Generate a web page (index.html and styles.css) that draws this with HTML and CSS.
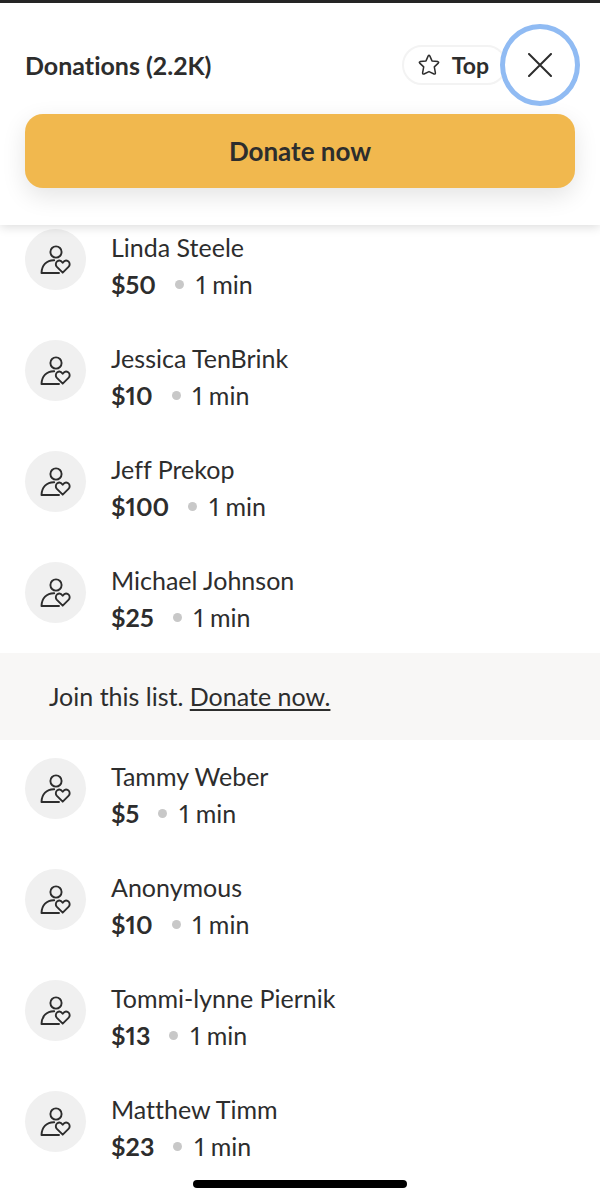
FILE: index.html
```
<!DOCTYPE html>
<html lang="en">
<head>
    <meta charset="UTF-8">
    <meta name="viewport" content="width=device-width, initial-scale=1.0">
    <title>Donations</title>
    <link rel="stylesheet" href="styles.css">
</head>
<body>

<!-- Shared icon -->
<svg class="icon-defs" aria-hidden="true">
    <symbol id="donor-icon" viewBox="0 0 32 30">
        <circle cx="16" cy="7" r="5.6"/>
        <path d="M14.2 15.2C6.500 15 1.700 20.500 1.500 28H19"/>
        <path d="M22.700 27.700L16.900 21.900C15.300 20.200 15.500 17.600 17.300 16.300C19 15.100 21.200 15.600 22.700 17.700C24.200 15.600 26.400 15.100 28.200 16.300C30 17.600 30.200 20.200 28.500 21.900Z"/>
    </symbol>
</svg>

<!-- Header -->
<header class="header">
    <div class="header-row">
        <h1 class="title">Donations (2.2K)</h1>
        <button class="top-button" type="button">
            <svg class="star-icon" viewBox="0 0 22 22" aria-hidden="true">
                <path d="M10.200 1.900Q11 0.700 11.800 1.900L14 6.900L19.900 7.600Q21.200 8 20.300 9.100L16.300 12.900L17.400 18.900Q17.400 20.500 16 20L11 17.600L6 20Q4.600 20.500 4.600 18.900L5.700 12.900L1.700 9.100Q0.800 8 2.100 7.600L8 6.900Z"/>
            </svg>
            Top
        </button>
        <button class="close-button" type="button" aria-label="Close">
            <svg class="close-icon" viewBox="0 0 24 24" aria-hidden="true">
                <path d="M1 1L23 23M23 1L1 23"/>
            </svg>
        </button>
    </div>
    <button class="donate-button" type="button">Donate now</button>
</header>

<main>
    <ul class="donation-list">
        <li class="donation">
            <span class="avatar"><svg class="donor-icon"><use href="#donor-icon"/></svg></span>
            <div class="donation-info">
                <div class="name">Linda Steele</div>
                <div class="details"><strong>$50</strong><span class="dot"></span><span>1 min</span></div>
            </div>
        </li>
        <li class="donation">
            <span class="avatar"><svg class="donor-icon"><use href="#donor-icon"/></svg></span>
            <div class="donation-info">
                <div class="name">Jessica TenBrink</div>
                <div class="details"><strong>$10</strong><span class="dot"></span><span>1 min</span></div>
            </div>
        </li>
        <li class="donation">
            <span class="avatar"><svg class="donor-icon"><use href="#donor-icon"/></svg></span>
            <div class="donation-info">
                <div class="name">Jeff Prekop</div>
                <div class="details"><strong>$100</strong><span class="dot"></span><span>1 min</span></div>
            </div>
        </li>
        <li class="donation">
            <span class="avatar"><svg class="donor-icon"><use href="#donor-icon"/></svg></span>
            <div class="donation-info">
                <div class="name">Michael Johnson</div>
                <div class="details"><strong>$25</strong><span class="dot"></span><span>1 min</span></div>
            </div>
        </li>
    </ul>

    <!-- Join banner -->
    <p class="join">Join this list. <a href="#donate">Donate now.</a></p>

    <ul class="donation-list">
        <li class="donation">
            <span class="avatar"><svg class="donor-icon"><use href="#donor-icon"/></svg></span>
            <div class="donation-info">
                <div class="name">Tammy Weber</div>
                <div class="details"><strong>$5</strong><span class="dot"></span><span>1 min</span></div>
            </div>
        </li>
        <li class="donation">
            <span class="avatar"><svg class="donor-icon"><use href="#donor-icon"/></svg></span>
            <div class="donation-info">
                <div class="name">Anonymous</div>
                <div class="details"><strong>$10</strong><span class="dot"></span><span>1 min</span></div>
            </div>
        </li>
        <li class="donation">
            <span class="avatar"><svg class="donor-icon"><use href="#donor-icon"/></svg></span>
            <div class="donation-info">
                <div class="name">Tommi-lynne Piernik</div>
                <div class="details"><strong>$13</strong><span class="dot"></span><span>1 min</span></div>
            </div>
        </li>
        <li class="donation">
            <span class="avatar"><svg class="donor-icon"><use href="#donor-icon"/></svg></span>
            <div class="donation-info">
                <div class="name">Matthew Timm</div>
                <div class="details"><strong>$23</strong><span class="dot"></span><span>1 min</span></div>
            </div>
        </li>
    </ul>
</main>

<div class="home-indicator"></div>

</body>
</html>
```

FILE: styles.css
```
* {
    box-sizing: border-box;
}
body {
    margin: 0;
    font-family: Lato, "Liberation Sans", sans-serif;
    font-size: 25px;
    font-variant-ligatures: none;
    font-variant-numeric: proportional-nums;
    color: #2d2d2d;
    background-color: #fff;
}
button {
    font-family: inherit;
    color: inherit;
    cursor: pointer;
}
svg {
    fill: none;
    stroke: #2d2d2d;
    stroke-linecap: round;
    stroke-linejoin: round;
}
.icon-defs {
    display: none;
}
.header {
    position: sticky;
    top: 0;
    z-index: 1;
    padding: 21px 25px 37px;
    border-top: 3px solid #252525;
    background-color: #fff;
    box-shadow: 0 2px 10px rgba(0, 0, 0, 0.14);
}
.header-row {
    display: flex;
    align-items: center;
    margin: 0 -5px 8px 0;
}
.title {
    flex: 1;
    margin: 0;
    font-size: 25px;
    font-weight: bold;
}
.top-button {
    display: flex;
    align-items: center;
    gap: 12px;
    height: 40px;
    padding: 0 16px 0 14px;
    border: 2px solid #f3f3f3;
    border-radius: 20px;
    background-color: #fff;
    font-size: 23px;
    font-weight: bold;
}
.star-icon {
    width: 22px;
    height: 22px;
    stroke-width: 1.5;
}
.close-button {
    display: flex;
    align-items: center;
    justify-content: center;
    width: 80px;
    height: 82px;
    margin-left: -7px;
    padding: 0;
    border: 5px solid #90bbf3;
    border-radius: 50%;
    background-color: #fff;
}
.close-icon {
    width: 24px;
    height: 24px;
    stroke-width: 2;
}
.donate-button {
    display: block;
    width: 100%;
    height: 74px;
    border: none;
    border-radius: 18px;
    background-color: #f1b84e;
    box-shadow: 0 8px 24px rgba(0, 0, 0, 0.11);
    font-size: 26px;
    font-weight: bold;
}
.donation-list {
    display: flex;
    flex-direction: column;
    gap: 36px;
    margin: 0;
    padding: 4px 25px 16px;
    list-style: none;
}
.donation {
    display: flex;
    gap: 25px;
}
.avatar {
    display: flex;
    align-items: center;
    justify-content: center;
    width: 61px;
    height: 61px;
    border-radius: 50%;
    background-color: #f0f0f0;
}
.donor-icon {
    width: 32px;
    height: 30px;
    stroke-width: 1.9;
}
.donation-info {
    height: 75px;
    line-height: 37px;
}
.details {
    display: flex;
    align-items: center;
}
.dot {
    width: 9px;
    height: 9px;
    margin: 0 12px 0 19px;
    border-radius: 50%;
    background-color: #c8c8c8;
}
.join {
    margin: 0 0 14px;
    padding: 25px 49px;
    background-color: #f8f7f6;
    line-height: 37px;
}
.join a {
    color: inherit;
    text-decoration-thickness: 2px;
    text-underline-offset: 3px;
}
.home-indicator {
    position: fixed;
    bottom: 12px;
    left: 50%;
    z-index: 2;
    width: 214px;
    height: 8px;
    margin-left: -107px;
    border-radius: 4px;
    background-color: #000;
}
```
